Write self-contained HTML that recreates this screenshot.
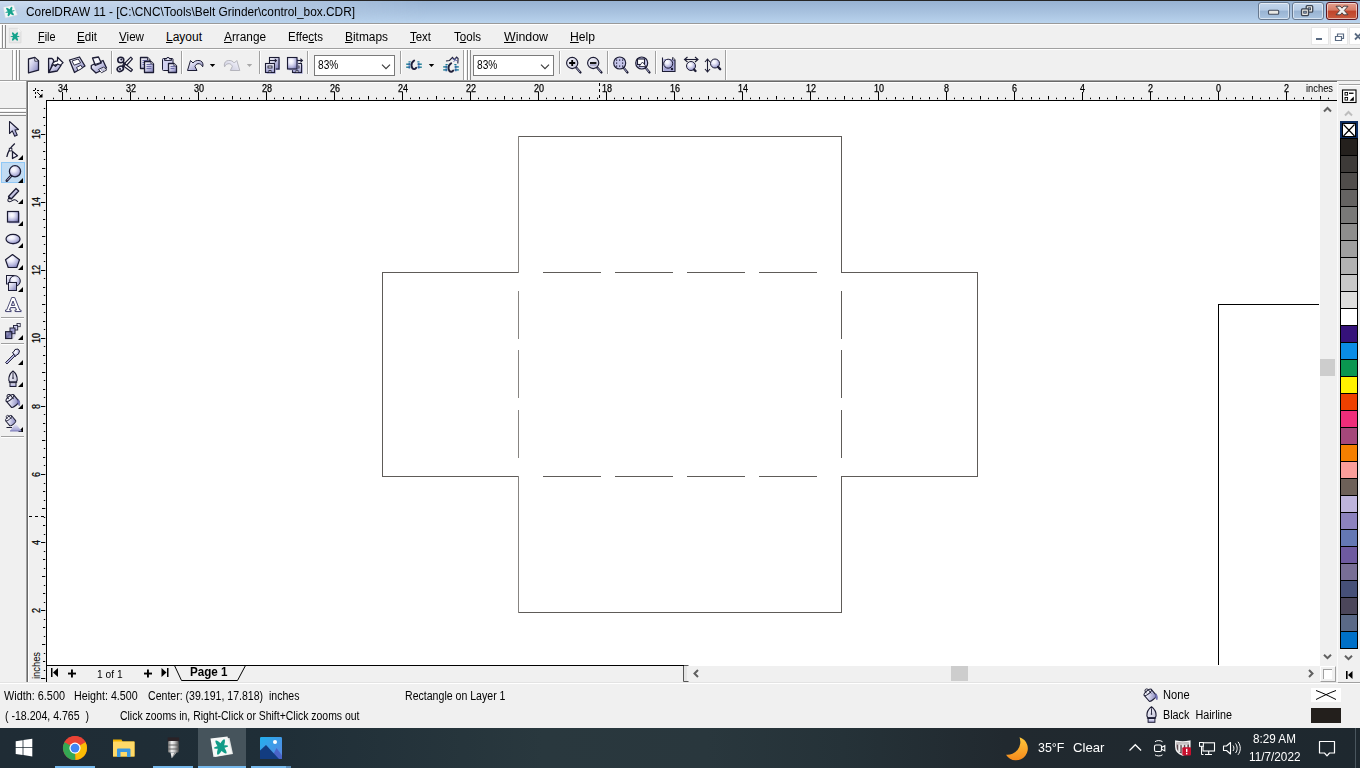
<!DOCTYPE html>
<html lang="en"><head><meta charset="utf-8"><title>CorelDRAW 11 - control_box.CDR</title>
<style>
html,body{margin:0;padding:0}
body{width:1360px;height:768px;overflow:hidden;background:#f0f0f0;position:relative;font-family:"Liberation Sans",sans-serif}
.a{position:absolute;box-sizing:border-box}
.t{position:absolute;white-space:pre;line-height:1;display:block}
svg{position:absolute;overflow:visible}
u{text-decoration:underline;text-underline-offset:1px}
</style></head><body>
<div class="a" style="left:0px;top:0px;width:1360px;height:1px;background:#262626"></div>
<div class="a" style="left:0px;top:1px;width:1360px;height:22px;background:linear-gradient(#98b3d3,#a9c3e0 55%,#b9d3ed)"></div>
<div class="a" style="left:0px;top:1px;width:430px;height:22px;background:linear-gradient(90deg,rgba(206,221,240,.95),rgba(203,218,238,.85) 45%,rgba(190,208,232,0));-webkit-mask-image:linear-gradient(#000,rgba(0,0,0,.12));mask-image:linear-gradient(#000,rgba(0,0,0,.12))"></div>
<div class="a" style="left:0px;top:23px;width:1360px;height:1px;background:#9a9a9a"></div>
<div class="a" style="left:0px;top:24px;width:1360px;height:1px;background:#fff"></div>
<span class="t" style="left:26px;top:6px;font-size:12px;color:#000;font-weight:normal;transform-origin:0 0;transform:scaleX(0.9887);">CorelDRAW 11 - [C:\CNC\Tools\Belt Grinder\control_box.CDR]</span>
<div class="a" style="left:0px;top:48px;width:1360px;height:1px;background:#a0a0a0"></div>
<div class="a" style="left:0px;top:49px;width:1360px;height:1px;background:#fff"></div>
<span class="t" style="left:37.5px;top:31px;font-size:12px;color:#000;font-weight:normal;transform-origin:0 0;transform:scaleX(0.9051);"><u>F</u>ile</span>
<span class="t" style="left:77px;top:31px;font-size:12px;color:#000;font-weight:normal;transform-origin:0 0;transform:scaleX(0.9672);"><u>E</u>dit</span>
<span class="t" style="left:119px;top:31px;font-size:12px;color:#000;font-weight:normal;transform-origin:0 0;transform:scaleX(0.9693);"><u>V</u>iew</span>
<span class="t" style="left:166px;top:31px;font-size:12px;color:#000;font-weight:normal;"><u>L</u>ayout</span>
<span class="t" style="left:224px;top:31px;font-size:12px;color:#000;font-weight:normal;transform-origin:0 0;transform:scaleX(0.9838);"><u>A</u>rrange</span>
<span class="t" style="left:288px;top:31px;font-size:12px;color:#000;font-weight:normal;transform-origin:0 0;transform:scaleX(0.9599);">Effe<u>c</u>ts</span>
<span class="t" style="left:345px;top:31px;font-size:12px;color:#000;font-weight:normal;transform-origin:0 0;transform:scaleX(0.9920);"><u>B</u>itmaps</span>
<span class="t" style="left:410px;top:31px;font-size:12px;color:#000;font-weight:normal;transform-origin:0 0;transform:scaleX(0.9542);"><u>T</u>ext</span>
<span class="t" style="left:454px;top:31px;font-size:12px;color:#000;font-weight:normal;transform-origin:0 0;transform:scaleX(0.9638);">T<u>o</u>ols</span>
<span class="t" style="left:504px;top:31px;font-size:12px;color:#000;font-weight:normal;transform-origin:0 0;transform:scaleX(1.0309);"><u>W</u>indow</span>
<span class="t" style="left:570px;top:31px;font-size:12px;color:#000;font-weight:normal;transform-origin:0 0;transform:scaleX(1.0130);"><u>H</u>elp</span>
<div class="a" style="left:0px;top:80px;width:1360px;height:1px;background:#a0a0a0"></div>
<div class="a" style="left:0px;top:25px;width:1px;height:23px;background:#fff"></div>
<div class="a" style="left:2px;top:25px;width:1px;height:23px;background:#8a8a8a"></div>
<div class="a" style="left:3px;top:25px;width:1px;height:23px;background:#fff"></div>
<div class="a" style="left:5px;top:25px;width:1px;height:23px;background:#8a8a8a"></div>
<div class="a" style="left:12px;top:50px;width:1px;height:30px;background:#a0a0a0"></div>
<div class="a" style="left:13px;top:50px;width:1px;height:30px;background:#fff"></div>
<div class="a" style="left:14px;top:50px;width:1px;height:30px;background:#fff"></div>
<div class="a" style="left:16px;top:50px;width:1px;height:30px;background:#8a8a8a"></div>
<div class="a" style="left:17px;top:50px;width:1px;height:30px;background:#fff"></div>
<div class="a" style="left:19px;top:50px;width:1px;height:30px;background:#8a8a8a"></div>
<div class="a" style="left:463px;top:50px;width:1px;height:30px;background:#a0a0a0"></div>
<div class="a" style="left:464px;top:50px;width:1px;height:30px;background:#fff"></div>
<div class="a" style="left:465px;top:50px;width:1px;height:30px;background:#fff"></div>
<div class="a" style="left:467px;top:50px;width:1px;height:30px;background:#8a8a8a"></div>
<div class="a" style="left:468px;top:50px;width:1px;height:30px;background:#fff"></div>
<div class="a" style="left:470px;top:50px;width:1px;height:30px;background:#8a8a8a"></div>
<div class="a" style="left:111px;top:51px;width:1px;height:23px;background:#a0a0a0"></div>
<div class="a" style="left:112px;top:51px;width:1px;height:23px;background:#fff"></div>
<div class="a" style="left:181px;top:51px;width:1px;height:23px;background:#a0a0a0"></div>
<div class="a" style="left:182px;top:51px;width:1px;height:23px;background:#fff"></div>
<div class="a" style="left:259px;top:51px;width:1px;height:23px;background:#a0a0a0"></div>
<div class="a" style="left:260px;top:51px;width:1px;height:23px;background:#fff"></div>
<div class="a" style="left:307px;top:51px;width:1px;height:23px;background:#a0a0a0"></div>
<div class="a" style="left:308px;top:51px;width:1px;height:23px;background:#fff"></div>
<div class="a" style="left:400px;top:51px;width:1px;height:23px;background:#a0a0a0"></div>
<div class="a" style="left:401px;top:51px;width:1px;height:23px;background:#fff"></div>
<div class="a" style="left:559px;top:51px;width:1px;height:23px;background:#a0a0a0"></div>
<div class="a" style="left:560px;top:51px;width:1px;height:23px;background:#fff"></div>
<div class="a" style="left:607px;top:51px;width:1px;height:23px;background:#a0a0a0"></div>
<div class="a" style="left:608px;top:51px;width:1px;height:23px;background:#fff"></div>
<div class="a" style="left:655px;top:51px;width:1px;height:23px;background:#a0a0a0"></div>
<div class="a" style="left:656px;top:51px;width:1px;height:23px;background:#fff"></div>
<div class="a" style="left:725px;top:50px;width:1px;height:30px;background:#a0a0a0"></div>
<div class="a" style="left:726px;top:50px;width:1px;height:30px;background:#fff"></div>
<div class="a" style="left:314px;top:55px;width:81px;height:21px;background:#fff;border:1px solid #7a7a7a"></div>
<span class="t" style="left:317.6px;top:59px;font-size:12px;color:#000;font-weight:normal;transform-origin:0 0;transform:scaleX(0.8452);">83%</span>
<svg style="left:381px;top:63.500px" width="10" height="6" viewBox="0 0 10 6"><path d="M1 .7L5 4.700L9 .7" fill="none" stroke="#3a3a3a" stroke-width="1.150"/></svg>
<div class="a" style="left:473px;top:55px;width:81px;height:21px;background:#fff;border:1px solid #7a7a7a"></div>
<span class="t" style="left:476.6px;top:59px;font-size:12px;color:#000;font-weight:normal;transform-origin:0 0;transform:scaleX(0.8452);">83%</span>
<svg style="left:540px;top:63.500px" width="10" height="6" viewBox="0 0 10 6"><path d="M1 .7L5 4.700L9 .7" fill="none" stroke="#3a3a3a" stroke-width="1.150"/></svg>
<div class="a" style="left:1311px;top:27px;width:18px;height:18px;background:#fff;border:1px solid #e6e6e6"></div>
<div class="a" style="left:1330px;top:27px;width:18px;height:18px;background:#fff;border:1px solid #e6e6e6"></div>
<div class="a" style="left:1349px;top:27px;width:18px;height:18px;background:#fff;border:1px solid #e6e6e6"></div>
<svg style="left:1311px;top:27px" width="49" height="18" viewBox="0 0 49 18"><rect x="5" y="11" width="6" height="2" fill="#5a6b82"/><path d="M24.5 13.5h6v-4h-6z M26.5 9.5v-2.5h6v4.5h-2" fill="none" stroke="#5a6b82" stroke-width="1.2"/><path d="M44 6.5l6 6M50 6.5l-6 6" stroke="#5a6b82" stroke-width="1.8"/></svg>
<div class="a" style="left:1258px;top:2px;width:32px;height:18px;background:linear-gradient(#c4d6ec 0%,#b4cae4 45%,#98b3d2 50%,#aac4e0 100%);border:1px solid #66788f;border-radius:3px;box-shadow:inset 0 0 0 1px rgba(255,255,255,.55)"></div>
<div class="a" style="left:1292px;top:2px;width:32px;height:18px;background:linear-gradient(#c4d6ec 0%,#b4cae4 45%,#98b3d2 50%,#aac4e0 100%);border:1px solid #66788f;border-radius:3px;box-shadow:inset 0 0 0 1px rgba(255,255,255,.55)"></div>
<div class="a" style="left:1326px;top:2px;width:32px;height:18px;background:linear-gradient(#e3a08f 0%,#d67b66 45%,#c0432a 50%,#c85a3e 100%);border:1px solid #5a1420;border-radius:3px;box-shadow:inset 0 0 0 1px rgba(255,255,255,.55)"></div>
<svg style="left:1258px;top:2px" width="100" height="18" viewBox="0 0 100 18"><rect x="10.500" y="8.300" width="10.200" height="4" rx="1" fill="#e9e9e5" stroke="#434b5c" stroke-width="1.100"/><rect x="48.200" y="3.700" width="6.500" height="6.500" rx="1" fill="#e9e9e5" stroke="#3c4452" stroke-width="1.300"/><rect x="50.300" y="5.800" width="2.300" height="2" fill="#8fa6c6" stroke="#3c4452" stroke-width=".8"/><rect x="43.500" y="6.900" width="7" height="6.700" rx="1" fill="#e9e9e5" stroke="#3c4452" stroke-width="1.300"/><rect x="45.700" y="9.200" width="2.600" height="2" fill="#8fa6c6" stroke="#3c4452" stroke-width=".8"/><path d="M78 4.300l4.200-.2 1.800 2.100 1.800-2.100 4.200.2-3.700 4.200 3.700 4.200-4.200.2-1.800-2.100-1.800 2.100-4.200-.2 3.700-4.200z" fill="#f1efee" stroke="#4a3c3c" stroke-width="1" stroke-linejoin="round"/></svg>
<div class="a" style="left:0px;top:81px;width:26px;height:1px;background:#fff"></div>
<div class="a" style="left:26px;top:81px;width:1px;height:602px;background:#a0a0a0"></div>
<div class="a" style="left:27px;top:81px;width:1px;height:602px;background:#696969"></div>
<div class="a" style="left:27px;top:81px;width:1310px;height:1px;background:#696969"></div>
<div class="a" style="left:28px;top:82px;width:1px;height:601px;background:#fff"></div>
<div class="a" style="left:28px;top:82px;width:1309px;height:1px;background:#fff"></div>
<div class="a" style="left:46px;top:100px;width:1274px;height:566px;background:#fff"></div>
<div class="a" style="left:46px;top:100px;width:1291px;height:1px;background:#000"></div>
<div class="a" style="left:46px;top:100px;width:1px;height:566px;background:#000"></div>
<div class="a" style="left:46px;top:665px;width:638px;height:1px;background:#000"></div>
<svg style="left:0;top:0" width="1360" height="768" fill="#000"><rect x="53" y="97.7" width="1" height="1.5"/><rect x="62" y="92" width="1" height="8"/><rect x="70" y="97.7" width="1" height="1.5"/><rect x="79" y="97" width="1" height="2.3"/><rect x="87" y="97.7" width="1" height="1.5"/><rect x="96" y="96" width="1" height="3.5"/><rect x="104" y="97.7" width="1" height="1.5"/><rect x="113" y="97" width="1" height="2.3"/><rect x="121" y="97.7" width="1" height="1.5"/><rect x="130" y="92" width="1" height="8"/><rect x="138" y="97.7" width="1" height="1.5"/><rect x="147" y="97" width="1" height="2.3"/><rect x="155" y="97.7" width="1" height="1.5"/><rect x="164" y="96" width="1" height="3.5"/><rect x="172" y="97.7" width="1" height="1.5"/><rect x="181" y="97" width="1" height="2.3"/><rect x="189" y="97.7" width="1" height="1.5"/><rect x="198" y="92" width="1" height="8"/><rect x="206" y="97.7" width="1" height="1.5"/><rect x="215" y="97" width="1" height="2.3"/><rect x="223" y="97.7" width="1" height="1.5"/><rect x="232" y="96" width="1" height="3.5"/><rect x="240" y="97.7" width="1" height="1.5"/><rect x="249" y="97" width="1" height="2.3"/><rect x="257" y="97.7" width="1" height="1.5"/><rect x="266" y="92" width="1" height="8"/><rect x="274" y="97.7" width="1" height="1.5"/><rect x="283" y="97" width="1" height="2.3"/><rect x="291" y="97.7" width="1" height="1.5"/><rect x="300" y="96" width="1" height="3.5"/><rect x="308" y="97.7" width="1" height="1.5"/><rect x="317" y="97" width="1" height="2.3"/><rect x="325" y="97.7" width="1" height="1.5"/><rect x="334" y="92" width="1" height="8"/><rect x="342" y="97.7" width="1" height="1.5"/><rect x="351" y="97" width="1" height="2.3"/><rect x="359" y="97.7" width="1" height="1.5"/><rect x="368" y="96" width="1" height="3.5"/><rect x="376" y="97.7" width="1" height="1.5"/><rect x="385" y="97" width="1" height="2.3"/><rect x="393" y="97.7" width="1" height="1.5"/><rect x="402" y="92" width="1" height="8"/><rect x="410" y="97.7" width="1" height="1.5"/><rect x="419" y="97" width="1" height="2.3"/><rect x="427" y="97.7" width="1" height="1.5"/><rect x="436" y="96" width="1" height="3.5"/><rect x="444" y="97.7" width="1" height="1.5"/><rect x="453" y="97" width="1" height="2.3"/><rect x="461" y="97.7" width="1" height="1.5"/><rect x="470" y="92" width="1" height="8"/><rect x="478" y="97.7" width="1" height="1.5"/><rect x="487" y="97" width="1" height="2.3"/><rect x="495" y="97.7" width="1" height="1.5"/><rect x="504" y="96" width="1" height="3.5"/><rect x="512" y="97.7" width="1" height="1.5"/><rect x="521" y="97" width="1" height="2.3"/><rect x="529" y="97.7" width="1" height="1.5"/><rect x="538" y="92" width="1" height="8"/><rect x="546" y="97.7" width="1" height="1.5"/><rect x="555" y="97" width="1" height="2.3"/><rect x="563" y="97.7" width="1" height="1.5"/><rect x="572" y="96" width="1" height="3.5"/><rect x="580" y="97.7" width="1" height="1.5"/><rect x="589" y="97" width="1" height="2.3"/><rect x="597" y="97.7" width="1" height="1.5"/><rect x="606" y="92" width="1" height="8"/><rect x="614" y="97.7" width="1" height="1.5"/><rect x="623" y="97" width="1" height="2.3"/><rect x="631" y="97.7" width="1" height="1.5"/><rect x="640" y="96" width="1" height="3.5"/><rect x="648" y="97.7" width="1" height="1.5"/><rect x="657" y="97" width="1" height="2.3"/><rect x="665" y="97.7" width="1" height="1.5"/><rect x="674" y="92" width="1" height="8"/><rect x="682" y="97.7" width="1" height="1.5"/><rect x="691" y="97" width="1" height="2.3"/><rect x="699" y="97.7" width="1" height="1.5"/><rect x="708" y="96" width="1" height="3.5"/><rect x="716" y="97.7" width="1" height="1.5"/><rect x="725" y="97" width="1" height="2.3"/><rect x="733" y="97.7" width="1" height="1.5"/><rect x="742" y="92" width="1" height="8"/><rect x="750" y="97.7" width="1" height="1.5"/><rect x="759" y="97" width="1" height="2.3"/><rect x="767" y="97.7" width="1" height="1.5"/><rect x="776" y="96" width="1" height="3.5"/><rect x="784" y="97.7" width="1" height="1.5"/><rect x="793" y="97" width="1" height="2.3"/><rect x="801" y="97.7" width="1" height="1.5"/><rect x="810" y="92" width="1" height="8"/><rect x="818" y="97.7" width="1" height="1.5"/><rect x="827" y="97" width="1" height="2.3"/><rect x="835" y="97.7" width="1" height="1.5"/><rect x="844" y="96" width="1" height="3.5"/><rect x="852" y="97.7" width="1" height="1.5"/><rect x="861" y="97" width="1" height="2.3"/><rect x="869" y="97.7" width="1" height="1.5"/><rect x="878" y="92" width="1" height="8"/><rect x="886" y="97.7" width="1" height="1.5"/><rect x="895" y="97" width="1" height="2.3"/><rect x="903" y="97.7" width="1" height="1.5"/><rect x="912" y="96" width="1" height="3.5"/><rect x="920" y="97.7" width="1" height="1.5"/><rect x="929" y="97" width="1" height="2.3"/><rect x="937" y="97.7" width="1" height="1.5"/><rect x="946" y="92" width="1" height="8"/><rect x="954" y="97.7" width="1" height="1.5"/><rect x="963" y="97" width="1" height="2.3"/><rect x="971" y="97.7" width="1" height="1.5"/><rect x="980" y="96" width="1" height="3.5"/><rect x="988" y="97.7" width="1" height="1.5"/><rect x="997" y="97" width="1" height="2.3"/><rect x="1005" y="97.7" width="1" height="1.5"/><rect x="1014" y="92" width="1" height="8"/><rect x="1022" y="97.7" width="1" height="1.5"/><rect x="1031" y="97" width="1" height="2.3"/><rect x="1039" y="97.7" width="1" height="1.5"/><rect x="1048" y="96" width="1" height="3.5"/><rect x="1056" y="97.7" width="1" height="1.5"/><rect x="1065" y="97" width="1" height="2.3"/><rect x="1073" y="97.7" width="1" height="1.5"/><rect x="1082" y="92" width="1" height="8"/><rect x="1090" y="97.7" width="1" height="1.5"/><rect x="1099" y="97" width="1" height="2.3"/><rect x="1107" y="97.7" width="1" height="1.5"/><rect x="1116" y="96" width="1" height="3.5"/><rect x="1124" y="97.7" width="1" height="1.5"/><rect x="1133" y="97" width="1" height="2.3"/><rect x="1141" y="97.7" width="1" height="1.5"/><rect x="1150" y="92" width="1" height="8"/><rect x="1158" y="97.7" width="1" height="1.5"/><rect x="1167" y="97" width="1" height="2.3"/><rect x="1175" y="97.7" width="1" height="1.5"/><rect x="1184" y="96" width="1" height="3.5"/><rect x="1192" y="97.7" width="1" height="1.5"/><rect x="1201" y="97" width="1" height="2.3"/><rect x="1209" y="97.7" width="1" height="1.5"/><rect x="1218" y="92" width="1" height="8"/><rect x="1226" y="97.7" width="1" height="1.5"/><rect x="1235" y="97" width="1" height="2.3"/><rect x="1243" y="97.7" width="1" height="1.5"/><rect x="1252" y="96" width="1" height="3.5"/><rect x="1260" y="97.7" width="1" height="1.5"/><rect x="1269" y="97" width="1" height="2.3"/><rect x="1277" y="97.7" width="1" height="1.5"/><rect x="1286" y="92" width="1" height="8"/><rect x="1294" y="97.7" width="1" height="1.5"/><rect x="1303" y="97" width="1" height="2.3"/><rect x="1311" y="97.7" width="1" height="1.5"/><rect x="1320" y="96" width="1" height="3.5"/><rect x="1328" y="97.7" width="1" height="1.5"/><rect x="43.8" y="108" width="1.4" height="1"/><rect x="43" y="117" width="2.2" height="1"/><rect x="43.8" y="125" width="1.4" height="1"/><rect x="41" y="134" width="4.3" height="1"/><rect x="43.8" y="142" width="1.4" height="1"/><rect x="43" y="151" width="2.2" height="1"/><rect x="43.8" y="159" width="1.4" height="1"/><rect x="42" y="168" width="3.3" height="1"/><rect x="43.8" y="176" width="1.4" height="1"/><rect x="43" y="185" width="2.2" height="1"/><rect x="43.8" y="193" width="1.4" height="1"/><rect x="41" y="202" width="4.3" height="1"/><rect x="43.8" y="210" width="1.4" height="1"/><rect x="43" y="219" width="2.2" height="1"/><rect x="43.8" y="227" width="1.4" height="1"/><rect x="42" y="236" width="3.3" height="1"/><rect x="43.8" y="244" width="1.4" height="1"/><rect x="43" y="253" width="2.2" height="1"/><rect x="43.8" y="261" width="1.4" height="1"/><rect x="41" y="270" width="4.3" height="1"/><rect x="43.8" y="278" width="1.4" height="1"/><rect x="43" y="287" width="2.2" height="1"/><rect x="43.8" y="295" width="1.4" height="1"/><rect x="42" y="304" width="3.3" height="1"/><rect x="43.8" y="312" width="1.4" height="1"/><rect x="43" y="321" width="2.2" height="1"/><rect x="43.8" y="329" width="1.4" height="1"/><rect x="41" y="338" width="4.3" height="1"/><rect x="43.8" y="346" width="1.4" height="1"/><rect x="43" y="355" width="2.2" height="1"/><rect x="43.8" y="363" width="1.4" height="1"/><rect x="42" y="372" width="3.3" height="1"/><rect x="43.8" y="380" width="1.4" height="1"/><rect x="43" y="389" width="2.2" height="1"/><rect x="43.8" y="397" width="1.4" height="1"/><rect x="41" y="406" width="4.3" height="1"/><rect x="43.8" y="414" width="1.4" height="1"/><rect x="43" y="423" width="2.2" height="1"/><rect x="43.8" y="431" width="1.4" height="1"/><rect x="42" y="440" width="3.3" height="1"/><rect x="43.8" y="448" width="1.4" height="1"/><rect x="43" y="457" width="2.2" height="1"/><rect x="43.8" y="465" width="1.4" height="1"/><rect x="41" y="474" width="4.3" height="1"/><rect x="43.8" y="483" width="1.4" height="1"/><rect x="43" y="491" width="2.2" height="1"/><rect x="43.8" y="500" width="1.4" height="1"/><rect x="42" y="508" width="3.3" height="1"/><rect x="43.8" y="517" width="1.4" height="1"/><rect x="43" y="525" width="2.2" height="1"/><rect x="43.8" y="534" width="1.4" height="1"/><rect x="41" y="542" width="4.3" height="1"/><rect x="43.8" y="551" width="1.4" height="1"/><rect x="43" y="559" width="2.2" height="1"/><rect x="43.8" y="568" width="1.4" height="1"/><rect x="42" y="576" width="3.3" height="1"/><rect x="43.8" y="585" width="1.4" height="1"/><rect x="43" y="593" width="2.2" height="1"/><rect x="43.8" y="602" width="1.4" height="1"/><rect x="41" y="610" width="4.3" height="1"/><rect x="43.8" y="619" width="1.4" height="1"/><rect x="43" y="627" width="2.2" height="1"/><rect x="43.8" y="636" width="1.4" height="1"/><rect x="42" y="644" width="3.3" height="1"/><rect x="43.8" y="653" width="1.4" height="1"/><rect x="43" y="661" width="2.2" height="1"/><rect x="43.8" y="670" width="1.4" height="1"/><rect x="41" y="678" width="4.3" height="1"/></svg>
<span class="t" style="left:58px;top:83.5px;font-size:10px;color:#000;font-weight:normal;transform-origin:0 0;transform:scaleX(0.8990);-webkit-text-stroke:.25px #000;">34</span>
<span class="t" style="left:126px;top:83.5px;font-size:10px;color:#000;font-weight:normal;transform-origin:0 0;transform:scaleX(0.8990);-webkit-text-stroke:.25px #000;">32</span>
<span class="t" style="left:194px;top:83.5px;font-size:10px;color:#000;font-weight:normal;transform-origin:0 0;transform:scaleX(0.8990);-webkit-text-stroke:.25px #000;">30</span>
<span class="t" style="left:262px;top:83.5px;font-size:10px;color:#000;font-weight:normal;transform-origin:0 0;transform:scaleX(0.8990);-webkit-text-stroke:.25px #000;">28</span>
<span class="t" style="left:330px;top:83.5px;font-size:10px;color:#000;font-weight:normal;transform-origin:0 0;transform:scaleX(0.8990);-webkit-text-stroke:.25px #000;">26</span>
<span class="t" style="left:398px;top:83.5px;font-size:10px;color:#000;font-weight:normal;transform-origin:0 0;transform:scaleX(0.8990);-webkit-text-stroke:.25px #000;">24</span>
<span class="t" style="left:466px;top:83.5px;font-size:10px;color:#000;font-weight:normal;transform-origin:0 0;transform:scaleX(0.8990);-webkit-text-stroke:.25px #000;">22</span>
<span class="t" style="left:534px;top:83.5px;font-size:10px;color:#000;font-weight:normal;transform-origin:0 0;transform:scaleX(0.8990);-webkit-text-stroke:.25px #000;">20</span>
<span class="t" style="left:602px;top:83.5px;font-size:10px;color:#000;font-weight:normal;transform-origin:0 0;transform:scaleX(0.8990);-webkit-text-stroke:.25px #000;">18</span>
<span class="t" style="left:670px;top:83.5px;font-size:10px;color:#000;font-weight:normal;transform-origin:0 0;transform:scaleX(0.8990);-webkit-text-stroke:.25px #000;">16</span>
<span class="t" style="left:738px;top:83.5px;font-size:10px;color:#000;font-weight:normal;transform-origin:0 0;transform:scaleX(0.8990);-webkit-text-stroke:.25px #000;">14</span>
<span class="t" style="left:806px;top:83.5px;font-size:10px;color:#000;font-weight:normal;transform-origin:0 0;transform:scaleX(0.8990);-webkit-text-stroke:.25px #000;">12</span>
<span class="t" style="left:874px;top:83.5px;font-size:10px;color:#000;font-weight:normal;transform-origin:0 0;transform:scaleX(0.8990);-webkit-text-stroke:.25px #000;">10</span>
<span class="t" style="left:944px;top:83.5px;font-size:10px;color:#000;font-weight:normal;transform-origin:0 0;transform:scaleX(0.8990);-webkit-text-stroke:.25px #000;">8</span>
<span class="t" style="left:1012px;top:83.5px;font-size:10px;color:#000;font-weight:normal;transform-origin:0 0;transform:scaleX(0.8990);-webkit-text-stroke:.25px #000;">6</span>
<span class="t" style="left:1080px;top:83.5px;font-size:10px;color:#000;font-weight:normal;transform-origin:0 0;transform:scaleX(0.8990);-webkit-text-stroke:.25px #000;">4</span>
<span class="t" style="left:1148px;top:83.5px;font-size:10px;color:#000;font-weight:normal;transform-origin:0 0;transform:scaleX(0.8990);-webkit-text-stroke:.25px #000;">2</span>
<span class="t" style="left:1216px;top:83.5px;font-size:10px;color:#000;font-weight:normal;transform-origin:0 0;transform:scaleX(0.8990);-webkit-text-stroke:.25px #000;">0</span>
<span class="t" style="left:1284px;top:83.5px;font-size:10px;color:#000;font-weight:normal;transform-origin:0 0;transform:scaleX(0.8990);-webkit-text-stroke:.25px #000;">2</span>
<span class="t" style="left:1306.4px;top:83.5px;font-size:10px;color:#000;font-weight:normal;transform-origin:0 0;transform:scaleX(0.9341);">inches</span>
<span class="t" style="left:31.5px;top:138.5px;font-size:10px;color:#000;font-weight:normal;transform-origin:0 0;transform:rotate(-90deg) scaleX(0.8990);-webkit-text-stroke:.25px #000;">16</span>
<span class="t" style="left:31.5px;top:206.5px;font-size:10px;color:#000;font-weight:normal;transform-origin:0 0;transform:rotate(-90deg) scaleX(0.8990);-webkit-text-stroke:.25px #000;">14</span>
<span class="t" style="left:31.5px;top:274.5px;font-size:10px;color:#000;font-weight:normal;transform-origin:0 0;transform:rotate(-90deg) scaleX(0.8990);-webkit-text-stroke:.25px #000;">12</span>
<span class="t" style="left:31.5px;top:342.5px;font-size:10px;color:#000;font-weight:normal;transform-origin:0 0;transform:rotate(-90deg) scaleX(0.8990);-webkit-text-stroke:.25px #000;">10</span>
<span class="t" style="left:31.5px;top:408.5px;font-size:10px;color:#000;font-weight:normal;transform-origin:0 0;transform:rotate(-90deg) scaleX(0.8990);-webkit-text-stroke:.25px #000;">8</span>
<span class="t" style="left:31.5px;top:476.5px;font-size:10px;color:#000;font-weight:normal;transform-origin:0 0;transform:rotate(-90deg) scaleX(0.8990);-webkit-text-stroke:.25px #000;">6</span>
<span class="t" style="left:31.5px;top:544.5px;font-size:10px;color:#000;font-weight:normal;transform-origin:0 0;transform:rotate(-90deg) scaleX(0.8990);-webkit-text-stroke:.25px #000;">4</span>
<span class="t" style="left:31.5px;top:612.5px;font-size:10px;color:#000;font-weight:normal;transform-origin:0 0;transform:rotate(-90deg) scaleX(0.8990);-webkit-text-stroke:.25px #000;">2</span>
<span class="t" style="left:31.5px;top:679px;font-size:10px;color:#000;font-weight:normal;transform-origin:0 0;transform:rotate(-90deg) scaleX(0.9341);">inches</span>
<svg style="left:0;top:0" width="1360" height="768"><path d="M599.5 83v16" stroke="#000" stroke-dasharray="3 3" fill="none"/><path d="M29 516.5h16" stroke="#000" stroke-dasharray="3 3" fill="none"/></svg>
<svg style="left:0;top:0" width="60" height="110"><g fill="#000"><rect x="35" y="88" width="1" height="2"/><rect x="35" y="92" width="1" height="2"/><rect x="35" y="96" width="1" height="2"/><rect x="33" y="90" width="2" height="1"/><rect x="37" y="90" width="2" height="1"/><rect x="41" y="90" width="2" height="1"/><path d="M37.2 92.2l4.3 4.3" stroke="#000" stroke-width="1" /><path d="M42.5 93.5v4h-4z"/></g></svg>
<svg style="left:0;top:0" width="1360" height="768" shape-rendering="crispEdges"><g fill="none" stroke="#5e5b58" stroke-width="1"><path d="M518 136.5H841.5V272.5H977.5V476.5H841.5V612.5H518M518 476.5H382.5V272.5H518"/><path d="M543 272.5h58M615 272.5h58M687 272.5h58M759 272.5h58"/><path d="M543 476.5h58M615 476.5h58M687 476.5h58M759 476.5h58"/><path d="M841.5 291v48M841.5 350v48M841.5 410v48"/></g><g fill="none" stroke="#878481"><path d="M518.5 136v137M518.5 476v137"/><path d="M518.5 291v48M518.5 350v48M518.5 410v48"/></g><path d="M1319 304.5H1218.5V665" fill="none" stroke="#000"/></svg>
<div class="a" style="left:1320px;top:101px;width:17px;height:565px;background:#f0f0f0"></div>
<div class="a" style="left:1320px;top:359px;width:15px;height:17px;background:#cdcdcd"></div>
<div class="a" style="left:1337px;top:82px;width:1px;height:600px;background:#fbfbfb"></div>
<div class="a" style="left:684px;top:666px;width:652px;height:16px;background:#f0f0f0"></div>
<div class="a" style="left:951px;top:666px;width:17px;height:15px;background:#cdcdcd"></div>
<div class="a" style="left:0px;top:682px;width:1360px;height:1px;background:#e3e3e3"></div>
<div class="a" style="left:0px;top:683px;width:1360px;height:1px;background:#fff"></div>
<svg style="left:0;top:0" width="1360" height="768"><g fill="none" stroke="#606060" stroke-width="2"><path d="M1324 111.5l3.5-3.5 3.5 3.5"/><path d="M1324 654.7l3.5 3.5 3.5-3.5"/><path d="M1345 655.7l3.5 3.5 3.5-3.5"/><path d="M698 670l-3.5 3.5 3.5 3.5"/><path d="M1309 670l3.5 3.5-3.5 3.5"/></g><path d="M1345 115.5l3.5-3.5 3.5 3.5" fill="none" stroke="#bdbdbd" stroke-width="2"/><path d="M688.5 665.5h-5v16h5" fill="none" stroke="#555" stroke-width="1"/><rect x="684" y="666" width="3" height="15" fill="#e4e4e4"/></svg>
<div class="a" style="left:1320px;top:666px;width:16px;height:16px;background:#f0f0f0;border-right:1px solid #a0a0a0;border-bottom:1px solid #a0a0a0;border-top:1px solid #fff;border-left:1px solid #fff"></div>
<div class="a" style="left:1323px;top:669px;width:9px;height:10px;background:#fff;border-top:1px solid #a0a0a0;border-left:1px solid #a0a0a0"></div>
<svg style="left:1340px;top:666px" width="20" height="16"><rect x="6" y="5" width="1.6" height="8" fill="#000"/><path d="M12.5 5v8l-4.5-4z" fill="#000"/></svg>
<div class="a" style="left:1338px;top:682px;width:22px;height:1px;background:#a0a0a0"></div>
<div class="a" style="left:1340px;top:138px;width:18px;height:511px;background:#000"></div>
<div class="a" style="left:1341px;top:139px;width:16px;height:16px;background:#24201d"></div>
<div class="a" style="left:1341px;top:156px;width:16px;height:16px;background:#3d3a38"></div>
<div class="a" style="left:1341px;top:173px;width:16px;height:16px;background:#504d4b"></div>
<div class="a" style="left:1341px;top:190px;width:16px;height:16px;background:#656362"></div>
<div class="a" style="left:1341px;top:207px;width:16px;height:16px;background:#797978"></div>
<div class="a" style="left:1341px;top:224px;width:16px;height:16px;background:#8e8e8d"></div>
<div class="a" style="left:1341px;top:241px;width:16px;height:16px;background:#a0a0a0"></div>
<div class="a" style="left:1341px;top:258px;width:16px;height:16px;background:#b2b2b2"></div>
<div class="a" style="left:1341px;top:275px;width:16px;height:16px;background:#c8c8c8"></div>
<div class="a" style="left:1341px;top:292px;width:16px;height:16px;background:#dededd"></div>
<div class="a" style="left:1341px;top:309px;width:16px;height:16px;background:#ffffff"></div>
<div class="a" style="left:1341px;top:326px;width:16px;height:16px;background:#35127a"></div>
<div class="a" style="left:1341px;top:343px;width:16px;height:16px;background:#0a8ce6"></div>
<div class="a" style="left:1341px;top:360px;width:16px;height:16px;background:#0a9650"></div>
<div class="a" style="left:1341px;top:377px;width:16px;height:16px;background:#fff200"></div>
<div class="a" style="left:1341px;top:394px;width:16px;height:16px;background:#ee4000"></div>
<div class="a" style="left:1341px;top:411px;width:16px;height:16px;background:#ef2d7a"></div>
<div class="a" style="left:1341px;top:428px;width:16px;height:16px;background:#a5477a"></div>
<div class="a" style="left:1341px;top:445px;width:16px;height:16px;background:#f57f00"></div>
<div class="a" style="left:1341px;top:462px;width:16px;height:16px;background:#fa9e9a"></div>
<div class="a" style="left:1341px;top:479px;width:16px;height:16px;background:#6d6058"></div>
<div class="a" style="left:1341px;top:496px;width:16px;height:16px;background:#beb4dc"></div>
<div class="a" style="left:1341px;top:513px;width:16px;height:16px;background:#8c82be"></div>
<div class="a" style="left:1341px;top:530px;width:16px;height:16px;background:#6478b4"></div>
<div class="a" style="left:1341px;top:547px;width:16px;height:16px;background:#6e5aa0"></div>
<div class="a" style="left:1341px;top:564px;width:16px;height:16px;background:#786e96"></div>
<div class="a" style="left:1341px;top:581px;width:16px;height:16px;background:#465078"></div>
<div class="a" style="left:1341px;top:598px;width:16px;height:16px;background:#4b465a"></div>
<div class="a" style="left:1341px;top:615px;width:16px;height:16px;background:#5a6987"></div>
<div class="a" style="left:1341px;top:632px;width:16px;height:16px;background:#0070c8"></div>
<div class="a" style="left:1340px;top:121px;width:18px;height:17px;background:#fff;border:2px solid #0a2a5e;border-bottom-width:1px;box-shadow:inset 0 0 0 1px #000"></div>
<svg style="left:1340px;top:121px" width="18" height="17"><path d="M3.500 3.500l11 11.500M14.500 3.500l-11 11.500" stroke="#000" stroke-width="1.100"/><rect x="8" y="8.200" width="2" height="2" fill="#000"/></svg>
<svg style="left:1342px;top:89px" width="15" height="14"><rect x=".5" y="1" width="13.500" height="12.500" fill="#fff" stroke="#000" stroke-width="1.100"/><rect x="3" y="3.500" width="2.600" height="2.600" fill="none" stroke="#000" stroke-width=".9"/><rect x="7" y="3.600" width="4.500" height="1.300" fill="#000"/><rect x="3" y="8.500" width="2.600" height="2.600" fill="none" stroke="#000" stroke-width=".9"/><path d="M11.800 7.500v4.300h-4.300z" fill="#000"/></svg>
<div class="a" style="left:1339px;top:84px;width:21px;height:1px;background:#a0a0a0"></div>
<div class="a" style="left:1339px;top:85px;width:21px;height:1px;background:#fff"></div>
<div class="a" style="left:46px;top:666px;width:1px;height:16px;background:#000"></div>
<svg style="left:0;top:0" width="700" height="768"><path d="M46 665.5H174.5L181.5 680.5H237.5L245.5 665.5H684" fill="none" stroke="#000" stroke-width="1"/><g fill="#000"><rect x="51" y="668" width="1.5" height="9"/><path d="M58 668v9l-5-4.5z"/><rect x="68" y="672.6" width="8" height="1.9"/><rect x="71" y="669.5" width="1.9" height="8"/><rect x="144" y="672.6" width="8" height="1.9"/><rect x="147" y="669.5" width="1.9" height="8"/><path d="M161.5 668v9l5-4.5z"/><rect x="167" y="668" width="1.5" height="9"/></g></svg>
<span class="t" style="left:96.5px;top:669px;font-size:11px;color:#000;font-weight:normal;transform-origin:0 0;transform:scaleX(0.9302);">1 of 1</span>
<span class="t" style="left:190px;top:666px;font-size:12px;color:#000;font-weight:bold;transform-origin:0 0;transform:scaleX(0.9693);">Page 1</span>
<span class="t" style="left:4.4px;top:690px;font-size:12px;color:#000;font-weight:normal;transform-origin:0 0;transform:scaleX(0.9054);">Width: 6.500</span>
<span class="t" style="left:74.3px;top:690px;font-size:12px;color:#000;font-weight:normal;transform-origin:0 0;transform:scaleX(0.8923);">Height: 4.500</span>
<span class="t" style="left:147.6px;top:690px;font-size:12px;color:#000;font-weight:normal;transform-origin:0 0;transform:scaleX(0.8803);">Center: (39.191, 17.818)</span>
<span class="t" style="left:268.5px;top:690px;font-size:12px;color:#000;font-weight:normal;transform-origin:0 0;transform:scaleX(0.8793);">inches</span>
<span class="t" style="left:404.5px;top:690px;font-size:12px;color:#000;font-weight:normal;transform-origin:0 0;transform:scaleX(0.8810);">Rectangle on Layer 1</span>
<span class="t" style="left:4.6px;top:710px;font-size:12px;color:#000;font-weight:normal;transform-origin:0 0;transform:scaleX(0.8806);">( -18.204, 4.765  )</span>
<span class="t" style="left:119.6px;top:710px;font-size:12px;color:#000;font-weight:normal;transform-origin:0 0;transform:scaleX(0.8707);">Click zooms in, Right-Click or Shift+Click zooms out</span>
<span class="t" style="left:1163.3px;top:689px;font-size:12px;color:#000;font-weight:normal;transform-origin:0 0;transform:scaleX(0.9272);">None</span>
<span class="t" style="left:1163.3px;top:709px;font-size:12px;color:#000;font-weight:normal;transform-origin:0 0;transform:scaleX(0.8997);">Black  Hairline</span>
<div class="a" style="left:1311px;top:688px;width:30px;height:14px;background:#fff"></div>
<svg style="left:1311px;top:688px" width="30" height="14"><path d="M5 2.5C12 5 18 8 25 11.5M25 2.5C18 5 12 8 5 11.5" fill="none" stroke="#000" stroke-width="1"/></svg>
<div class="a" style="left:1311px;top:708px;width:30px;height:15px;background:#231f1c"></div>
<div class="a" style="left:0px;top:728px;width:1360px;height:40px;background:linear-gradient(90deg,#1f2c35 0%,#1f2e37 20%,#29383e 40%,#29373d 52%,#253238 62%,#21292f 74%,#1e282f 100%)"></div>
<div class="a" style="left:198px;top:728px;width:48px;height:40px;background:#46545c"></div>
<div class="a" style="left:55px;top:766px;width:40px;height:2px;background:#76b9ed"></div>
<div class="a" style="left:153px;top:766px;width:40px;height:2px;background:#76b9ed"></div>
<div class="a" style="left:198px;top:766px;width:48px;height:2px;background:#76b9ed"></div>
<div class="a" style="left:251px;top:766px;width:35px;height:2px;background:#76b9ed"></div>
<div class="a" style="left:286px;top:766px;width:5px;height:2px;background:#5b8db8"></div>
<div class="a" style="left:1355px;top:728px;width:1px;height:40px;background:#4a565e"></div>
<span class="t" style="left:1037.6px;top:741px;font-size:13px;color:#fff;font-weight:normal;transform-origin:0 0;transform:scaleX(0.9565);">35°F</span>
<span class="t" style="left:1073px;top:741px;font-size:13px;color:#fff;font-weight:normal;transform-origin:0 0;transform:scaleX(1.0140);">Clear</span>
<span class="t" style="left:1252.5px;top:733px;font-size:12px;color:#fff;font-weight:normal;transform-origin:0 0;transform:scaleX(0.9734);">8:29 AM</span>
<span class="t" style="left:1249.2px;top:751px;font-size:12px;color:#fff;font-weight:normal;transform-origin:0 0;transform:scaleX(0.9811);">11/7/2022</span>
<div class="a" style="left:0px;top:108px;width:26px;height:1px;background:#a0a0a0"></div>
<div class="a" style="left:0px;top:109px;width:26px;height:1px;background:#fff"></div>
<div class="a" style="left:0px;top:110px;width:26px;height:1px;background:#fff"></div>
<div class="a" style="left:0px;top:112px;width:26px;height:1px;background:#8a8a8a"></div>
<div class="a" style="left:0px;top:113px;width:26px;height:1px;background:#fff"></div>
<div class="a" style="left:0px;top:115px;width:26px;height:1px;background:#8a8a8a"></div>
<div class="a" style="left:1px;top:317px;width:23px;height:1px;background:#a0a0a0"></div>
<div class="a" style="left:1px;top:318px;width:23px;height:1px;background:#fff"></div>
<div class="a" style="left:1px;top:343px;width:23px;height:1px;background:#a0a0a0"></div>
<div class="a" style="left:1px;top:344px;width:23px;height:1px;background:#fff"></div>
<div class="a" style="left:1px;top:436px;width:23px;height:1px;background:#a0a0a0"></div>
<div class="a" style="left:1px;top:437px;width:23px;height:1px;background:#fff"></div>
<div class="a" style="left:1px;top:162px;width:24px;height:21px;background:#c2dcf3;border:1px solid #90c8f6"></div>
<svg style="left:0;top:0" width="30" height="450" fill="#000"><path d="M23 155v5h-5z"/><path d="M23 178v5h-5z"/><path d="M23 199v5h-5z"/><path d="M23 221v5h-5z"/><path d="M23 243v5h-5z"/><path d="M23 265v5h-5z"/><path d="M23 287v5h-5z"/><path d="M23 335v5h-5z"/><path d="M23 360v5h-5z"/><path d="M23 382v5h-5z"/><path d="M23 404v5h-5z"/><path d="M23 427v5h-5z"/></svg>
<svg style="left:0;top:0" width="1360" height="768"><defs><linearGradient id="g" x1="0" y1="0" x2="1" y2="1"><stop offset="0" stop-color="#ffffff"/><stop offset=".4" stop-color="#d4d4ec"/><stop offset="1" stop-color="#7c7cb8"/></linearGradient><linearGradient id="gv" x1="0" y1="0" x2="0" y2="1"><stop offset="0" stop-color="#f4f4fc"/><stop offset="1" stop-color="#9c9cd0"/></linearGradient><linearGradient id="gd" x1="0" y1="0" x2="1" y2="1"><stop offset="0" stop-color="#f8f8ff"/><stop offset="1" stop-color="#c4c4d8"/></linearGradient><radialGradient id="gl" cx=".38" cy=".33" r=".75"><stop offset="0" stop-color="#ffffff"/><stop offset=".3" stop-color="#ececfa"/><stop offset=".7" stop-color="#b4b4dc"/><stop offset="1" stop-color="#7c7cb4"/></radialGradient><linearGradient id="gb" x1="0" y1="0" x2="1" y2="1"><stop offset="0" stop-color="#b8b8dc"/><stop offset=".5" stop-color="#6c6ca0"/><stop offset="1" stop-color="#c4c4e4"/></linearGradient></defs><path d="M28.5 59l6.3-1.6 3.7 3.4v9.4l-10 2.6z" fill="url(#g)" stroke="#1c1c34" stroke-width="1.300" stroke-linejoin="round"/><path d="M34.8 57.4v3.8h3.7z" fill="#fff" stroke="#1c1c34" stroke-width=".8" stroke-linejoin="round"/><path d="M48.600 58.500h3.400l1.500 1.500v4l-4.900 8.500z" fill="url(#gv)" stroke="#1c1c34" stroke-width="1.300" stroke-linejoin="round"/><path d="M51.300 67c.7-4.300 3-6 6.200-6.200v-3.600l5.600 5.500-5 5-.3-3c-2.200-.2-4 .3-5 2.800z" fill="#fff" stroke="#1c1c34" stroke-width="1.200" stroke-linejoin="round"/><path d="M48.700 72.500l4.300-8 2.500 1.800 2.200-2.300 3.300 1.500-3.800 5.500z" fill="url(#g)" stroke="#1c1c34" stroke-width="1.300" stroke-linejoin="round"/><path d="M69.500 60l10-3 5.500 9-10.500 6.500z" fill="url(#g)" stroke="#1c1c34" stroke-width="1.300" stroke-linejoin="round"/><path d="M72 61l6.200-2 2.400 3.800-6.400 2.400z" fill="#fff" stroke="#1c1c34" stroke-width=".9" stroke-linejoin="round"/><path d="M76.500 67.500l4.300-2.300 1.700 2.800-4.300 2.500z" fill="#fff" stroke="#1c1c34" stroke-width=".9" stroke-linejoin="round"/><path d="M92.500 58l6-1 2.500 5.500-6 2z" fill="#f6f6fc" stroke="#1c1c34" stroke-width="1.300" stroke-linejoin="round"/><path d="M91.300 65.500l3-1.500 1 1.500 6-2.500-.5-1.500 2.200-1 3.500 7.500-10.500 5-4.700-4.500z" fill="url(#g)" stroke="#1c1c34" stroke-width="1.300" stroke-linejoin="round"/><path d="M98.500 69.500l5.200-2.500 3 3-5.200 2.700z" fill="#fff" stroke="#1c1c34" stroke-width=".9" stroke-linejoin="round"/><path d="M101 69.700l2.200-1 1.200 1.300-2.200 1z" fill="none" stroke="#8080b0" stroke-width=".7"/><path d="M123.500 64.500l7.300-7.300 1.600 1.600-6.400 7.200z" fill="#fff" stroke="#1c1c34" stroke-width="1.200" stroke-linejoin="round"/><path d="M124 63l8.400 6.800-1.500 1.800-8.200-6z" fill="#fff" stroke="#1c1c34" stroke-width="1.200" stroke-linejoin="round"/><ellipse cx="120.800" cy="60" rx="3" ry="2.700" fill="#e4e4f6" stroke="#1c1c34" stroke-width="1.600"/><circle cx="121.300" cy="59.600" r="1" fill="#1c1c34"/><ellipse cx="120.300" cy="68.800" rx="3.200" ry="2.500" transform="rotate(-28 120.300 68.800)" fill="#e4e4f6" stroke="#1c1c34" stroke-width="1.600"/><circle cx="120" cy="69" r="1" fill="#1c1c34"/><path d="M122.800 62l2.500 2.300-3 2.800" fill="none" stroke="#1c1c34" stroke-width="1.500"/><path d="M140.5 57.5h7.0l2.500 2.500v8.5h-9.5z" fill="url(#g)" stroke="#1c1c34" stroke-width="1.300" stroke-linejoin="round"/><path d="M147.5 57.5v2.500h2.500" fill="#fff" stroke="#1c1c34" stroke-width=".8"/><path d="M142.5 60.5h5.5" stroke="#6c6ca8" stroke-width="1"/><path d="M142.5 62.5h5.5" stroke="#6c6ca8" stroke-width="1"/><path d="M142.5 64.5h5.5" stroke="#6c6ca8" stroke-width="1"/><path d="M144.5 61.5h6.5l2.500 2.500v8.5h-9z" fill="url(#g)" stroke="#1c1c34" stroke-width="1.300" stroke-linejoin="round"/><path d="M151.0 61.5v2.500h2.500" fill="#fff" stroke="#1c1c34" stroke-width=".8"/><path d="M146.5 64.5h5" stroke="#6c6ca8" stroke-width="1"/><path d="M146.5 66.5h5" stroke="#6c6ca8" stroke-width="1"/><path d="M146.5 68.5h5" stroke="#6c6ca8" stroke-width="1"/><rect x="162.500" y="58.500" width="10.500" height="12" rx="1" fill="#d2d2f0" stroke="#1c1c34"/><path d="M164.500 60.500v-1.500h2l.5-1.500h2l.5 1.500h2v1.500z" fill="#e8e8f8" stroke="#1c1c34" stroke-width=".9" stroke-linejoin="round"/><path d="M168.5 63.5h5.5l2.500 2.500v6.5h-8z" fill="url(#g)" stroke="#1c1c34" stroke-width="1.300" stroke-linejoin="round"/><path d="M174.0 63.5v2.500h2.500" fill="#fff" stroke="#1c1c34" stroke-width=".8"/><path d="M170.5 66.5h4" stroke="#6c6ca8" stroke-width="1"/><path d="M170.5 68.5h4" stroke="#6c6ca8" stroke-width="1"/><path d="M187.500 70.500l3-10 2.500 2.500c1.500-2 3.500-2.700 6-2.500 2.500.2 4 2 4 4.500l-.3 1.800c-1.200-2.300-2.700-3.300-4.700-3.100-1.500.2-2.500 1.300-3 2.800l2 4z" transform="translate(0 0)" fill="url(#g)" stroke="#1c1c34" stroke-linejoin="round" opacity="1"/><path d="M187.500 70.500l3-10 2.500 2.500c1.500-2 3.500-2.700 6-2.500 2.500.2 4 2 4 4.500l-.3 1.800c-1.200-2.300-2.700-3.300-4.700-3.100-1.500.2-2.500 1.300-3 2.800l2 4z" transform="translate(36.8 0) scale(-1 1) translate(-390.5 0)" fill="url(#gd)" stroke="#b4b4bc" stroke-linejoin="round" opacity="1"/><path d="M209.8 64h5.400l-2.700 3z" fill="#000"/><path d="M246.8 64h5.400l-2.700 3z" fill="#a8a8a8"/><path d="M428.8 64h5.400l-2.700 3z" fill="#000"/><rect x="270.500" y="58.500" width="9.500" height="11.500" fill="#a8a8d8"/><rect x="269.500" y="57.500" width="9.500" height="11.500" fill="url(#g)" stroke="#1c1c34" stroke-width="1.100"/><path d="M270 60.500h6" stroke="#1c1c34" stroke-width="1.100"/><path d="M274.800 58.300l2.400 2.200-2.400 2.200z" fill="#1c1c34"/><rect x="266.7" y="64.7" width="9" height="9" fill="#a8a8d8"/><rect x="265.5" y="63.5" width="9" height="9" fill="url(#gv)" stroke="#1c1c34" stroke-width="1.100"/><rect x="268.0" y="66.0" width="4" height="2" fill="#fff" stroke="#1c1c34" stroke-width=".9"/><rect x="269.0" y="70.5" width="2" height="2" fill="#fff" stroke="#1c1c34" stroke-width=".8"/><rect x="293.7" y="64.7" width="9" height="9" fill="#a8a8d8"/><rect x="292.5" y="63.5" width="9" height="9" fill="url(#gv)" stroke="#1c1c34" stroke-width="1.100"/><rect x="295.0" y="66.0" width="4" height="2" fill="#fff" stroke="#1c1c34" stroke-width=".9"/><rect x="296.0" y="70.5" width="2" height="2" fill="#fff" stroke="#1c1c34" stroke-width=".8"/><rect x="288.700" y="58.700" width="9.500" height="11.500" fill="#a8a8d8"/><rect x="287.500" y="57.500" width="9.500" height="11.500" fill="url(#gl)" stroke="#1c1c34" stroke-width="1.100"/><path d="M297 60.500h4.500" stroke="#1c1c34" stroke-width="1.100"/><path d="M300.500 58l2.700 2.500-2.700 2.500z" fill="#1c1c34"/><path d="M414.2 60.5c-2.200 1.500-3 3.200-2.700 5.200.3 2 1.500 3.600 3 3.400.8-.1 1.300-.6 1.700-1.300" fill="none" stroke="#20203a" stroke-width="1.900" stroke-linecap="round"/><rect x="406.2" y="63.49999999999999" width="4.200" height="1.400" fill="#1c7c94"/><rect x="408.5" y="62.8" width="1.600" height="2.800" fill="#2c60a8" opacity=".8"/><rect x="406.2" y="66.5" width="4.200" height="1.400" fill="#1c7c94"/><rect x="408.5" y="65.8" width="1.600" height="2.800" fill="#2c60a8" opacity=".8"/><rect x="417.6" y="63.49999999999999" width="4.200" height="1.400" fill="#1c7c94"/><rect x="417.90000000000003" y="62.8" width="1.600" height="2.800" fill="#2c60a8" opacity=".8"/><rect x="417.6" y="66.5" width="4.200" height="1.400" fill="#1c7c94"/><rect x="417.90000000000003" y="65.8" width="1.600" height="2.800" fill="#2c60a8" opacity=".8"/><rect x="408.5" y="61.3" width="2.200" height="1.100" fill="#1c7c94"/><rect x="417.3" y="61.3" width="2.200" height="1.100" fill="#1c7c94"/><path d="M451.2 63.2c-2.200 1.500-3 3.200-2.700 5.200.3 2 1.500 3.600 3 3.400.8-.1 1.300-.6 1.700-1.300" fill="none" stroke="#20203a" stroke-width="1.900" stroke-linecap="round"/><rect x="443.2" y="66.2" width="4.200" height="1.400" fill="#1c7c94"/><rect x="445.5" y="65.5" width="1.600" height="2.800" fill="#2c60a8" opacity=".8"/><rect x="443.2" y="69.2" width="4.200" height="1.400" fill="#1c7c94"/><rect x="445.5" y="68.5" width="1.600" height="2.800" fill="#2c60a8" opacity=".8"/><rect x="454.6" y="66.2" width="4.200" height="1.400" fill="#1c7c94"/><rect x="454.90000000000003" y="65.5" width="1.600" height="2.800" fill="#2c60a8" opacity=".8"/><rect x="454.6" y="69.2" width="4.200" height="1.400" fill="#1c7c94"/><rect x="454.90000000000003" y="68.5" width="1.600" height="2.800" fill="#2c60a8" opacity=".8"/><rect x="445.5" y="64" width="2.200" height="1.100" fill="#1c7c94"/><rect x="454.3" y="64" width="2.200" height="1.100" fill="#1c7c94"/><path d="M446 61l3.500-.5 3-3.200 1.800 2.200 2.300-2.500 1.500 1.500-.3 5" fill="none" stroke="#20203a" stroke-width="1.100"/><path d="M452 58.500l5.500 2.500M453.500 62l3.500-4.500" stroke="#5058a0" stroke-width=".8"/><path d="M575.9 67.2L580.5 72.5" stroke="#1c1c34" stroke-width="2.200" stroke-linecap="round"/><path d="M576.4 67.7L579.9 71.9" stroke="#b8b8e0" stroke-width=".9"/><circle cx="572.2" cy="63" r="5.6" fill="url(#gd)" stroke="#1c1c34" stroke-width="1.15"/><path d="M569.200 63h6M572.200 60v6" stroke="#000" stroke-width="1.800"/><path d="M596.9 67.2L601.5 72.5" stroke="#1c1c34" stroke-width="2.200" stroke-linecap="round"/><path d="M597.4 67.7L600.9 71.9" stroke="#b8b8e0" stroke-width=".9"/><circle cx="593.2" cy="63" r="5.6" fill="url(#gd)" stroke="#1c1c34" stroke-width="1.15"/><path d="M590 63h6.400" stroke="#000" stroke-width="1.800"/><path d="M590 65h6.400" stroke="#8888b8" stroke-width="1"/><path d="M623.5 67.6L627.5 72.5" stroke="#1c1c34" stroke-width="2.200" stroke-linecap="round"/><path d="M624.0 68.1L626.9 71.9" stroke="#b8b8e0" stroke-width=".9"/><circle cx="619.7" cy="63" r="6" fill="#c6c6ea" stroke="#1c1c34" stroke-width="1.15"/><rect x="616" y="59.5" width="1.200" height="1.200" fill="#1c1c34"/><rect x="616" y="62.5" width="1.200" height="1.200" fill="#1c1c34"/><rect x="616" y="65.5" width="1.200" height="1.200" fill="#1c1c34"/><rect x="619" y="59.5" width="1.200" height="1.200" fill="#1c1c34"/><rect x="619" y="65.5" width="1.200" height="1.200" fill="#1c1c34"/><rect x="622" y="59.5" width="1.200" height="1.200" fill="#1c1c34"/><rect x="622" y="62.5" width="1.200" height="1.200" fill="#1c1c34"/><rect x="622" y="65.5" width="1.200" height="1.200" fill="#1c1c34"/><path d="M645.5 67.6L649.5 72.5" stroke="#1c1c34" stroke-width="2.200" stroke-linecap="round"/><path d="M646.0 68.1L648.9 71.9" stroke="#b8b8e0" stroke-width=".9"/><circle cx="641.7" cy="63" r="6" fill="#c6c6ea" stroke="#1c1c34" stroke-width="1.15"/><rect x="637.500" y="59" width="7" height="5.500" fill="#fff" stroke="#1c1c34" stroke-width="1.100"/><path d="M639 66.500l3.500-4.500 3.500 4.500z" fill="#fff" stroke="#1c1c34" stroke-width=".8"/><path d="M663.500 59h11.500v13h-11.500z" fill="#a8a8d8"/><path d="M662.500 57.500v14h12.500v-11.500l-2.500-2.500" fill="none" stroke="#1c1c34" stroke-width="1.100"/><path d="M672.500 57.500v2.500h2.500" fill="#fff" stroke="#1c1c34" stroke-width=".8"/><circle cx="668.200" cy="63.700" r="4.500" fill="url(#gl)" stroke="#1c1c34" stroke-width="1"/><circle cx="672" cy="69" r="1.200" fill="#1c1c34"/><path d="M685 59.500h12.500" stroke="#1c1c34" stroke-width="1.100"/><path d="M687.500 57l-3 2.500 3 2.500M695 57l3 2.500-3 2.500" fill="none" stroke="#1c1c34" stroke-width="1.100"/><circle cx="691" cy="66" r="4.500" fill="url(#gl)" stroke="#1c1c34" stroke-width="1"/><path d="M694 69.500l1.500 1.500" stroke="#1c1c34" stroke-width="2.400" stroke-linecap="round"/><path d="M707.500 60v11.500" stroke="#1c1c34" stroke-width="1.100"/><path d="M705 62l2.500-3 2.500 3M705 69l2.500 3 2.500-3" fill="none" stroke="#1c1c34" stroke-width="1.100"/><circle cx="715" cy="63.500" r="4.500" fill="url(#gl)" stroke="#1c1c34" stroke-width="1"/><path d="M718.200 67l2 2.200" stroke="#1c1c34" stroke-width="2.400" stroke-linecap="round"/></svg>
<svg style="left:0;top:0" width="30" height="450"><path d="M9.500 121.500v12l2.800-2.600 2.400 5.400 2.600-1.200-2.400-5.200 3.600-.4z" fill="url(#g)" stroke="#1c1c34" stroke-width="1.050" stroke-linejoin="round"/><path d="M14.800 143.500c-4 3.500-7 8-8 13.500" fill="none" stroke="#1c1c34" stroke-width="1.300"/><rect x="9.300" y="148.300" width="2.600" height="2.600" fill="#fff" stroke="#1c1c34" stroke-width=".9"/><path d="M12.500 151.500v7l5-2.800z" fill="#f2f2fb" stroke="#1c1c34" stroke-width="1.300" stroke-linejoin="round"/><path d="M11.300 175.700l-4.500 5" stroke="#1c1c34" stroke-width="2.600" stroke-linecap="round"/><path d="M10.800 176.200l-3.700 4.100" stroke="#c0c0e0" stroke-width=".9"/><circle cx="15" cy="171.300" r="5.600" fill="url(#gl)" stroke="#1c1c34" stroke-width="1.300"/><path d="M8.500 196.500l7.500-8 2.700 2.500-7.500 8z" fill="url(#g)" stroke="#1c1c34" stroke-width="1.300" stroke-linejoin="round"/><path d="M8.500 196.500l-.8 3 3.500-.5z" fill="#1c1c34"/><path d="M7.700 199.500c0 3 3 2.500 4.500 1.200 1.500-1.300 3.500-1.500 5.800 1.300" fill="none" stroke="#1c1c34" stroke-width="1.100"/><rect x="8.700" y="212.700" width="11" height="10.500" fill="#a0a0d0"/><rect x="7.500" y="211.500" width="11" height="10.500" fill="url(#gl)" stroke="#1c1c34" stroke-width="1.200"/><ellipse cx="13.500" cy="239.800" rx="7" ry="4.700" fill="#a0a0d0"/><ellipse cx="13" cy="239" rx="7" ry="4.700" fill="url(#gl)" stroke="#1c1c34" stroke-width="1.200"/><path d="M12.500 254.500l7 5.300-2.700 7.700h-8.600l-2.700-7.700z" fill="url(#gl)" stroke="#1c1c34" stroke-width="1.200" stroke-linejoin="round"/><rect x="6.500" y="275.500" width="7.500" height="8.500" fill="url(#g)" stroke="#1c1c34"/><circle cx="15" cy="281" r="5.300" fill="url(#gl)" stroke="#1c1c34"/><rect x="8.500" y="282.500" width="8" height="8" fill="url(#g)" stroke="#1c1c34"/><path d="M5.500 311.500h5.500v-1.500h-1.500l1-2.500h5l1 2.500h-1.500v1.500h6v-1.500h-1.300l-5-12.500h-3l-5 12.500h-1.200z M11.300 305.500l1.700-4.500 1.700 4.500z" transform="translate(.7 .8)" fill="#b4b4e0" fill-rule="evenodd"/><path d="M5.500 311.500h5.500v-1.500h-1.500l1-2.500h5l1 2.500h-1.500v1.500h6v-1.500h-1.300l-5-12.500h-3l-5 12.500h-1.200z M11.300 305.500l1.700-4.500 1.700 4.500z" fill="#fff" fill-rule="evenodd" stroke="#3c3c68" stroke-width=".9" stroke-linejoin="round"/><rect x="17" y="323.500" width="3.200" height="3.200" fill="#f0f0fc" stroke="#1c1c34" stroke-width=".8"/><rect x="13.500" y="325.500" width="4.200" height="4.500" fill="#d0d0f0" stroke="#1c1c34" stroke-width=".9"/><rect x="10" y="328" width="5" height="5.800" fill="#9c9ccc" stroke="#1c1c34" stroke-width="1"/><path d="M12.500 334.500h3.200l-2 4h-1.200z" fill="#d4d4ec"/><rect x="5.600" y="331.700" width="6.200" height="6.800" fill="url(#gb)" stroke="#1c1c34" stroke-width="1.200"/><path d="M5.500 362.500l8.500-8.500 1.500 1.500-8.500 8.500z" fill="#b0b0dc" stroke="#1c1c34" stroke-width=".9" stroke-linejoin="round"/><path d="M12.500 352.500l1.500-1 1-2 3-.5 1.500 2-1 3-2 1-1 1.500z" fill="url(#gl)" stroke="#1c1c34" stroke-width="1" stroke-linejoin="round"/><path d="M13 371c-3.15 2.500-4.41 5.800-4.20 9.200l1 1.800h6.40l1-1.800c.2-3.400-1.05-6.700-4.20-9.200z" fill="url(#gd)" stroke="#1c1c34" stroke-width="1.100" stroke-linejoin="round"/><path d="M13 372.5v5.500" stroke="#1c1c34" stroke-width=".9"/><circle cx="13" cy="378.3" r=".8" fill="#1c1c34"/><path d="M8.8 382.2h8.4" stroke="#1c1c34" stroke-width="1.200"/><rect x="10.0" y="382.7" width="6.0" height="3.8000000000000007" fill="url(#gv)" stroke="#1c1c34" stroke-width="1"/><g transform="translate(12.3 400.8) scale(1.05) rotate(-40)"><path d="M-4.600 -3.500v7.500c0 2 9.200 2 9.200 0v-7.500z" fill="url(#g)" stroke="#1c1c34" stroke-width="1.100" stroke-linejoin="round"/><ellipse cx="0" cy="-3.500" rx="4.600" ry="1.700" fill="#f4f4fc" stroke="#1c1c34" stroke-width="1"/><path d="M-1.500 -3.500c-1-5 4.500-5 3.500 0v3" fill="none" stroke="#1c1c34" stroke-width=".9"/></g><path d="M18.1 399.3c1.600 1.800 2.200 4 1.200 6.500-1.400-1.300-2-3.500-1.200-6.500z" fill="#7474b8" stroke="#5c5ca0" stroke-width=".5"/><path d="M15.500 423l6 8h-11.500z" fill="url(#gv)"/><path d="M10 431h11.500" stroke="#7c7cb8" stroke-width="1"/><g transform="translate(10.5 420.5) scale(0.85) rotate(-40)"><path d="M-4.600 -3.500v7.500c0 2 9.200 2 9.200 0v-7.500z" fill="url(#g)" stroke="#1c1c34" stroke-width="1.100" stroke-linejoin="round"/><ellipse cx="0" cy="-3.500" rx="4.600" ry="1.700" fill="#f4f4fc" stroke="#1c1c34" stroke-width="1"/><path d="M-1.500 -3.500c-1-5 4.500-5 3.500 0v3" fill="none" stroke="#1c1c34" stroke-width=".9"/></g><path d="M6.500 427.500h5.500" stroke="#1c1c34" stroke-width="1"/></svg>
<svg style="left:0;top:0" width="40" height="50"><path d="M3.300 7.200l10.300-2.300 3.800 10-12 3.200z" fill="#f4f6f8" stroke="#d0d6dc" stroke-width=".5"/><g transform="rotate(-12 10 11.500)"><ellipse cx="10" cy="11.5" rx="4.80" ry="0.82" transform="rotate(0 10 11.5)" fill="#17a38d"/><ellipse cx="10" cy="11.5" rx="5.18" ry="1.30" transform="rotate(56 10 11.5)" fill="#17a38d"/><ellipse cx="10" cy="11.5" rx="5.18" ry="1.30" transform="rotate(-56 10 11.5)" fill="#17a38d"/><circle cx="10" cy="11.5" r="1.73" fill="#17a38d"/></g><path d="M9.300 28.300h8.500l3.200 3.200v11.300h-11.700z" fill="#e9e9e9" stroke="#d6d6d6" stroke-width=".7"/><path d="M17.800 28.300v3.200h3.200z" fill="#fafafa"/><ellipse cx="15" cy="36.5" rx="4.60" ry="0.78" transform="rotate(0 15 36.5)" fill="#17a38d"/><ellipse cx="15" cy="36.5" rx="4.97" ry="1.24" transform="rotate(56 15 36.5)" fill="#17a38d"/><ellipse cx="15" cy="36.5" rx="4.97" ry="1.24" transform="rotate(-56 15 36.5)" fill="#17a38d"/><circle cx="15" cy="36.5" r="1.66" fill="#17a38d"/></svg>
<svg style="left:0;top:0" width="1360" height="768"><g transform="translate(1150 695) scale(1.0) rotate(-40)"><path d="M-4.600 -3.500v7.500c0 2 9.200 2 9.200 0v-7.500z" fill="url(#g)" stroke="#1c1c34" stroke-width="1.100" stroke-linejoin="round"/><ellipse cx="0" cy="-3.500" rx="4.600" ry="1.700" fill="#f4f4fc" stroke="#1c1c34" stroke-width="1"/><path d="M-1.500 -3.500c-1-5 4.500-5 3.500 0v3" fill="none" stroke="#1c1c34" stroke-width=".9"/></g><path d="M1155.8 693.5c1.600 1.800 2.200 4 1.200 6.500-1.400-1.300-2-3.500-1.200-6.500z" fill="#7474b8" stroke="#5c5ca0" stroke-width=".5"/><path d="M1151.5 706.8c-3.45 2.500-4.83 5.800-4.60 9.200l1 1.800h7.20l1-1.800c.2-3.400-1.15-6.700-4.60-9.200z" fill="url(#gd)" stroke="#1c1c34" stroke-width="1.100" stroke-linejoin="round"/><path d="M1151.5 708.3v5.500" stroke="#1c1c34" stroke-width=".9"/><circle cx="1151.5" cy="714.0999999999999" r=".8" fill="#1c1c34"/><path d="M1146.9 718.0h9.2" stroke="#1c1c34" stroke-width="1.200"/><rect x="1148.1000000000001" y="718.5" width="6.799999999999999" height="3.8000000000000007" fill="url(#gv)" stroke="#1c1c34" stroke-width="1"/></svg>
<svg style="left:0;top:0" width="1360" height="768"><defs><linearGradient id="cyl" x1="0" y1="0" x2="1" y2="0"><stop offset="0" stop-color="#6a6a6a"/><stop offset=".35" stop-color="#f4f4f4"/><stop offset=".6" stop-color="#c8c8c8"/><stop offset="1" stop-color="#4c4c4c"/></linearGradient><linearGradient id="sky" x1="0" y1="0" x2="1" y2="1"><stop offset="0" stop-color="#22b0ee"/><stop offset="1" stop-color="#5c84e0"/></linearGradient><linearGradient id="moon" x1="0" y1="0" x2="0" y2="1"><stop offset="0" stop-color="#ffc83c"/><stop offset="1" stop-color="#f58a1c"/></linearGradient></defs><path d="M15.700 741.200l6.900-1v7h-6.900z M23.400 740.100l8.900-1.300v8.400h-8.900z M15.700 748h6.900v7l-6.900-1z M23.400 748h8.900v8.400l-8.900-1.300z" fill="#fff"/><circle cx="75" cy="748.100" r="12" fill="#ea4335"/><path d="M75 748.100L64.600 742.100A12 12 0 0 0 75.500 760.100z" fill="#34a853"/><path d="M75 748.100L75.500 760.100A12 12 0 0 0 85.400 742.100z" fill="#fbbc05"/><path d="M75 748.100L64.600 742.100A12 12 0 0 1 85.400 742.100z" fill="#ea4335"/><path d="M75 742.700h10.700l-5.300 0z" fill="#fbbc05"/><circle cx="75" cy="748.100" r="5.600" fill="#fff"/><circle cx="75" cy="748.100" r="4.400" fill="#4285f4"/><path d="M113 739.500h8.500l1 2h12v15h-21.500z" fill="#f2b400"/><rect x="113" y="741.500" width="21.500" height="15" rx=".6" fill="#ffd968"/><path d="M117 757v-7.500a1 1 0 0 1 1-1h11.500a1 1 0 0 1 1 1v7.500h-3.500v-5h-6.500v5z" fill="#3b97e0"/><rect x="167.600" y="737.400" width="11.600" height="4" fill="#2a2226"/><rect x="168" y="741" width="10.800" height="11.500" rx="1" fill="url(#cyl)"/><path d="M168 745h10.800M168 749h10.800" stroke="#5a5a5a" stroke-width=".9"/><path d="M170.500 752.500h6l-4.800 5.800z" fill="#e8e8e8"/><path d="M174.500 752.500h2l-4.800 5.800z" fill="#8a8a8a"/><path d="M212 739.500l17.500-1.500 3.500 16-18 3z" fill="#dfe3e3"/><path d="M210.500 738.500l17-2 4.500 17-18.500 3.500z" fill="#f6f8f7"/><g transform="rotate(-8 221 747)"><ellipse cx="221" cy="747" rx="7.22" ry="1.52" transform="rotate(0 221 747)" fill="#109c88"/><ellipse cx="221" cy="747" rx="8.36" ry="2.28" transform="rotate(58 221 747)" fill="#109c88"/><ellipse cx="221" cy="747" rx="8.36" ry="2.28" transform="rotate(-58 221 747)" fill="#109c88"/><circle cx="221" cy="747" r="3.04" fill="#109c88"/></g><rect x="260" y="737" width="22" height="22" rx="1.200" fill="url(#sky)"/><circle cx="275" cy="742" r="2" fill="#fff"/><path d="M271 759l5.500-11 5.500 7.500v3.500z" fill="#4a64c8"/><path d="M260 750.500l6-5.500 13 14h-19z" fill="#123c80"/><path d="M260 759h22" stroke="#123c80" stroke-width=".1"/><path d="M1019.500 737.200a11.800 11.800 0 1 1 -13.500 17.500a13 13 0 0 0 13.500 -17.500z" fill="url(#moon)"/><path d="M1129.500 750.500l5.800-5.800 5.800 5.800" fill="none" stroke="#fff" stroke-width="1.300"/><rect x="1154.500" y="745" width="7" height="6.500" rx="1.500" fill="none" stroke="#fff" stroke-width="1.100"/><path d="M1161.800 747.300l3-1.600v5.200l-3-1.600" fill="none" stroke="#fff" stroke-width="1.100"/><path d="M1155 741.700c1.800-1.500 5.700-1.500 7.500 0M1155 754.800c1.800 1.500 5.700 1.500 7.500 0" fill="none" stroke="#fff" stroke-width="1"/><path d="M1175.800 741.200c4.500 1 9.500 1 14 0v5.500c0 4.500-3 7-7 8.300-4-1.300-7-3.800-7-8.300z" fill="#5e4a50" stroke="#f4f4f4" stroke-width="1.500"/><path d="M1179.300 744.500v7.500M1182.800 744v10M1186.300 744.500v4" stroke="#ececec" stroke-width="2.100"/><path d="M1176.500 742c4 1 8.500 1 12.500 0v2.500c-4 1-8.500 1-12.500 0z" fill="#d8d8d8" opacity=".85"/><rect x="1182.300" y="747.300" width="8.700" height="8.300" rx="1" fill="#c8102e"/><rect x="1186" y="748.800" width="1.400" height="3.400" fill="#fff"/><rect x="1186" y="753" width="1.400" height="1.400" fill="#fff"/><rect x="1203" y="742.800" width="11.500" height="8.200" fill="none" stroke="#fff" stroke-width="1.100"/><path d="M1208.700 751v3M1205 754.500h7" stroke="#fff" stroke-width="1.100"/><rect x="1199.500" y="742.500" width="3.800" height="3.800" fill="#1f2930" stroke="#fff" stroke-width="1"/><path d="M1201.500 746.300v8.200h2" fill="none" stroke="#fff" stroke-width="1"/><path d="M1223.500 746h3l4-3.500v11.500l-4-3.500h-3z" fill="none" stroke="#fff" stroke-width="1.100" stroke-linejoin="round"/><path d="M1233 745.500c1.200 1.500 1.200 4 0 5.500M1235.500 743.500c2.200 2.800 2.200 7 0 9.500M1238 741.800c3 3.800 3 9.200 0 13" fill="none" stroke="#fff" stroke-width="1"/><path d="M1319.500 741.500h15v11.500h-5l-2.500 2.800-2.500-2.800h-5z" fill="none" stroke="#fff" stroke-width="1.200" stroke-linejoin="round"/></svg>
</body></html>
